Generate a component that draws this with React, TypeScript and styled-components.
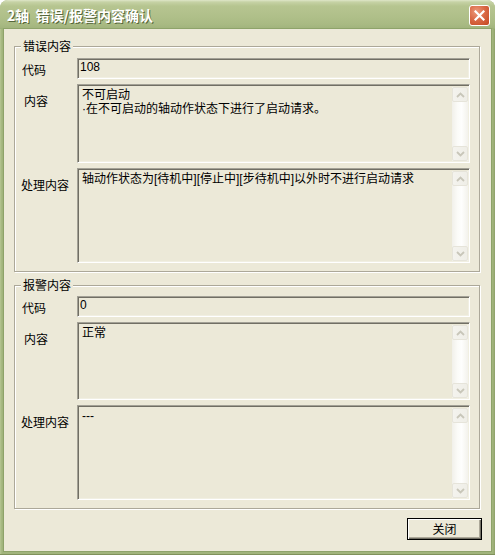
import React from 'react';
import styled, { createGlobalStyle } from 'styled-components';

const Global = createGlobalStyle`
  html, body { margin: 0; padding: 0; background: #ffffff; }
  body { font-family: "Liberation Sans", "Noto Sans CJK SC", sans-serif; font-size: 12px; color: #000; }
  #root { width: 495px; height: 555px; }
`;

const Window = styled.div`
  width: 495px;
  height: 555px;
  display: flex;
  flex-direction: column;
  border-radius: 8px 8px 0 0;
  overflow: hidden;
  background: #a6b882;
`;

const TitleBar = styled.div`
  height: 29px;
  flex: none;
  display: flex;
  align-items: center;
  justify-content: space-between;
  padding: 0 5px 0 7px;
  background: linear-gradient(
    #dfe6c8 0px,
    #c6d2a5 2px,
    #b6c590 6px,
    #b0c08a 16px,
    #a9ba83 24px,
    #a2b47d 28px,
    #97aa72 29px
  );
`;

const Title = styled.span`
  color: #ffffff;
  font-family: "Noto Sans CJK SC", sans-serif;
  font-weight: bold;
  font-size: 14px;
  line-height: 17px;
  white-space: pre;
  text-shadow: 1px 1px 0 #56663a;
  margin-top: 1px;
`;

const CloseX = styled.button`
  width: 21px;
  height: 21px;
  padding: 0;
  box-sizing: border-box;
  border: 1px solid #ffffff;
  border-radius: 3px;
  background: radial-gradient(circle at 35% 30%, #ec9a7c 0%, #da6a47 45%, #c4471f 100%);
  display: flex;
  align-items: center;
  justify-content: center;
  margin-top: 1px;
`;

const Frame = styled.div`
  flex: 1;
  display: flex;
  padding: 0 4px 4px 4px;
  background: linear-gradient(to right, #b7c794 0, #a1b47c 2px, #a1b47c calc(100% - 2px), #8ea068 100%);
  box-shadow: inset 0 -1px 0 #7f915b;
`;

const Client = styled.div`
  flex: 1;
  display: flex;
  flex-direction: column;
  background: #ece9d8;
  padding: 10px 9px 0 10px;
  box-shadow: 0 0 0 1px #8ea36a;
`;

const Group = styled.fieldset<{ $pt: number; $mt: number }>`
  margin: ${(p) => p.$mt}px 2px 0 0;
  padding: ${(p) => p.$pt}px 9px 8px 0;
  min-width: 0;
  border: 1px solid #aca899;
  box-shadow: inset 1px 1px 0 #ffffff, 1px 1px 0 #ffffff;
  display: grid;
  grid-template-columns: 62px 1fr;
  row-gap: 5px;
`;

const Legend = styled.legend`
  margin-left: 6px;
  padding: 0 2px;
  font-size: 12px;
  line-height: 14px;
  font-family: "Noto Sans CJK SC", sans-serif;
  background: #ece9d8;
`;

const Label = styled.div<{ $indent: number; $top: number }>`
  padding-left: ${(p) => p.$indent}px;
  padding-top: ${(p) => p.$top}px;
  font-family: "Noto Sans CJK SC", sans-serif;
  font-size: 12px;
  line-height: 14px;
  white-space: nowrap;
`;

const Sunken = styled.div<{ $h: number }>`
  height: ${(p) => p.$h}px;
  box-sizing: border-box;
  border: 1px solid;
  border-color: #a3a196 #ffffff #ffffff #a3a196;
  box-shadow: inset 1px 1px 0 #716f64, inset -1px -1px 0 #f1efe2;
  background: #ece9d8;
  display: flex;
  overflow: hidden;
`;

const CodeText = styled.div`
  padding: 1px 0 0 2px;
  line-height: 14px;
  font-size: 12px;
`;

const MemoText = styled.div`
  flex: 1;
  padding: 3px 0 0 4px;
  line-height: 14px;
  font-size: 12px;
  white-space: pre-wrap;
`;

const ScrollBar = styled.div`
  width: 16px;
  flex: none;
  margin: 2px 1px 1px 0;
  display: flex;
  flex-direction: column;
  justify-content: space-between;
  background: linear-gradient(to right, #f1f0ea 0, #fbfbf8 35%, #fefefd 60%, #f3f2ec 100%);
`;

const ScrollBtn = styled.div`
  height: 15px;
  box-sizing: border-box;
  border: 1px solid #e6e4da;
  border-radius: 2px;
  background: linear-gradient(to right, #f4f3ee, #efeee7);
  display: flex;
  align-items: center;
  justify-content: center;
`;

const Footer = styled.div`
  display: flex;
  justify-content: flex-end;
  margin-top: 9px;
`;

const Button = styled.button`
  width: 75px;
  height: 22px;
  padding: 0;
  box-sizing: border-box;
  border: 1px solid #000000;
  background: #ece9d8;
  box-shadow: inset 1px 1px 0 #ffffff, inset -1px -1px 0 #716f64, inset -2px -2px 0 #aca899;
  font-family: "Noto Sans CJK SC", sans-serif;
  font-size: 12px;
  line-height: 14px;
  color: #000;
`;

const Chevron = ({ up }: { up: boolean }) => (
  <svg width="9" height="6" viewBox="0 0 9 6">
    <path
      d={up ? 'M1 5 L4.5 1.5 L8 5' : 'M1 1 L4.5 4.5 L8 1'}
      fill="none"
      stroke="#c8c6b9"
      strokeWidth="1.8"
    />
  </svg>
);

const Scroll = () => (
  <ScrollBar>
    <ScrollBtn>
      <Chevron up />
    </ScrollBtn>
    <ScrollBtn>
      <Chevron up={false} />
    </ScrollBtn>
  </ScrollBar>
);

type Info = {
  legend: string;
  code: string;
  content: string;
  handling: string;
  contentH: number;
  handlingH: number;
  pt: number;
  mt: number;
};

const groups: Info[] = [
  {
    legend: '错误内容',
    code: '108',
    content: '不可启动\n·在不可启动的轴动作状态下进行了启动请求。',
    handling: '轴动作状态为[待机中][停止中][步待机中]以外时不进行启动请求',
    contentH: 79,
    handlingH: 95,
    pt: 5,
    mt: 0,
  },
  {
    legend: '报警内容',
    code: '0',
    content: '正常',
    handling: '---',
    contentH: 78,
    handlingH: 95,
    pt: 4,
    mt: 6,
  },
];

const InfoGroup = ({ g }: { g: Info }) => (
  <Group $pt={g.pt} $mt={g.mt}>
    <Legend>{g.legend}</Legend>
    <Label $indent={7} $top={5}>代码</Label>
    <Sunken $h={21}>
      <CodeText>{g.code}</CodeText>
    </Sunken>
    <Label $indent={9} $top={10}>内容</Label>
    <Sunken $h={g.contentH}>
      <MemoText>{g.content}</MemoText>
      <Scroll />
    </Sunken>
    <Label $indent={6} $top={10}>处理内容</Label>
    <Sunken $h={g.handlingH}>
      <MemoText>{g.handling}</MemoText>
      <Scroll />
    </Sunken>
  </Group>
);

export default function App() {
  return (
    <>
      <Global />
      <Window>
        <TitleBar>
          <Title>{'2轴  错误/报警内容确认'}</Title>
          <CloseX aria-label="close">
            <svg width="11" height="11" viewBox="0 0 11 11">
              <path d="M1.5 1.5 L9.5 9.5 M9.5 1.5 L1.5 9.5" stroke="#ffffff" strokeWidth="2.2" strokeLinecap="square" />
            </svg>
          </CloseX>
        </TitleBar>
        <Frame>
          <Client>
            {groups.map((g) => (
              <InfoGroup key={g.legend} g={g} />
            ))}
            <Footer>
              <Button>关闭</Button>
            </Footer>
          </Client>
        </Frame>
      </Window>
    </>
  );
}
